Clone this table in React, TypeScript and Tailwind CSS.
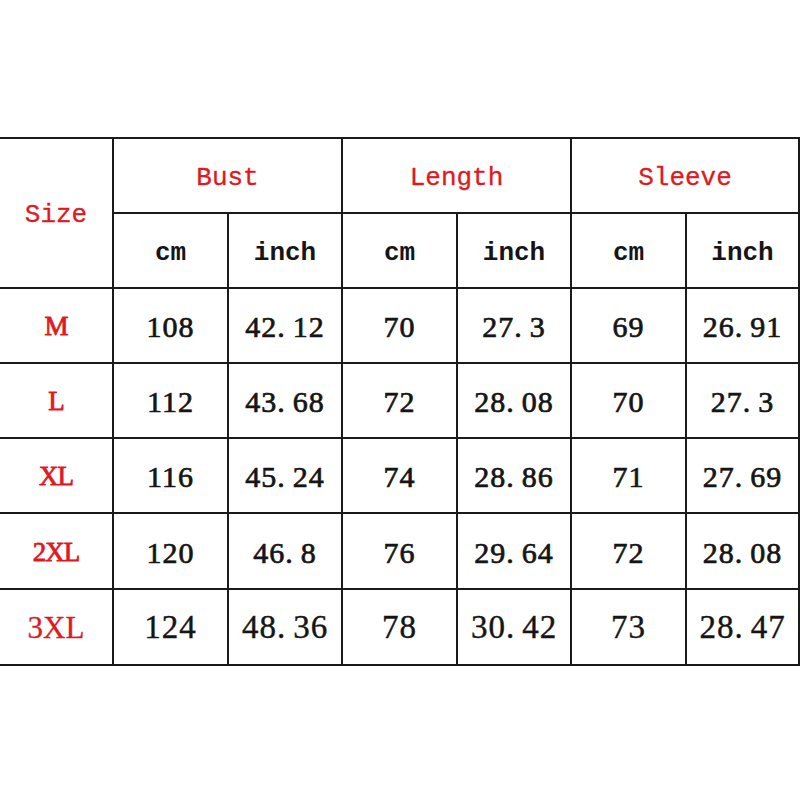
const red = "text-[#e0191f]";

const rows = [
  { size: "M", v: ["108", "42.12", "70", "27.3", "69", "26.91"] },
  { size: "L", v: ["112", "43.68", "72", "28.08", "70", "27.3"] },
  { size: "XL", v: ["116", "45.24", "74", "28.86", "71", "27.69"] },
  { size: "2XL", v: ["120", "46.8", "76", "29.64", "72", "28.08"] },
  { size: "3XL", v: ["124", "48.36", "78", "30.42", "73", "28.47"] },
];

const cell = "flex items-center justify-center border-r-2 border-b-2 border-[#1a1a1a]";
const mono = "font-['Liberation_Mono',monospace]";
const serif = "font-['Liberation_Serif',serif]";

// the source shows a wide gap after the decimal point
const Num = ({ value, big }: { value: string; big?: boolean }) => {
  const [a, b] = value.split(".");
  return (
    <span
      className={`${serif} ${big ? "text-[33px] [-webkit-text-stroke:0.4px_#151515]" : "text-[30px] [-webkit-text-stroke:0.7px_#151515]"} tracking-[1px] text-[#151515] pt-[2px]`}
    >
      {a}
      {b !== undefined && (
        <>
          <span className="mr-[7px]">.</span>
          {b}
        </>
      )}
    </span>
  );
};

export default function App() {
  return (
    <div className="w-[800px] h-[800px] bg-white pt-[137px]">
      <div className="grid grid-cols-[114px_115px_114px_115px_114px_115px_113px] grid-rows-[75px_75px_75px_75px_75px_76px_76px] border-t-2 border-[#1a1a1a]">
        <div className={`${cell} row-span-2 ${mono} ${red} text-[26px] pt-[4px] [-webkit-text-stroke:0.3px_#e0191f]`}>Size</div>
        <div className={`${cell} col-span-2 ${mono} ${red} text-[26px] pt-[6px] [-webkit-text-stroke:0.3px_#e0191f]`}>Bust</div>
        <div className={`${cell} col-span-2 ${mono} ${red} text-[26px] pt-[6px] [-webkit-text-stroke:0.3px_#e0191f]`}>Length</div>
        <div className={`${cell} col-span-2 ${mono} ${red} text-[26px] pt-[6px] [-webkit-text-stroke:0.3px_#e0191f]`}>Sleeve</div>
        {["cm", "inch", "cm", "inch", "cm", "inch"].map((u, i) => (
          <div key={i} className={`${cell} ${mono} font-bold text-[26px] text-[#151515] pt-[6px]`}>
            {u}
          </div>
        ))}
        {rows.map((r, ri) => (
          <div key={r.size} className="contents">
            <div
              className={`${cell} ${serif} ${red} ${ri === 4 ? "text-[31px] [-webkit-text-stroke:0.3px_#e0191f]" : "text-[27px] tracking-[-1px] [-webkit-text-stroke:0.8px_#e0191f]"} pt-[2px]`}
            >
              {r.size}
            </div>
            {r.v.map((v, i) => (
              <div key={i} className={cell}>
                <Num value={v} big={ri === 4} />
              </div>
            ))}
          </div>
        ))}
      </div>
    </div>
  );
}
